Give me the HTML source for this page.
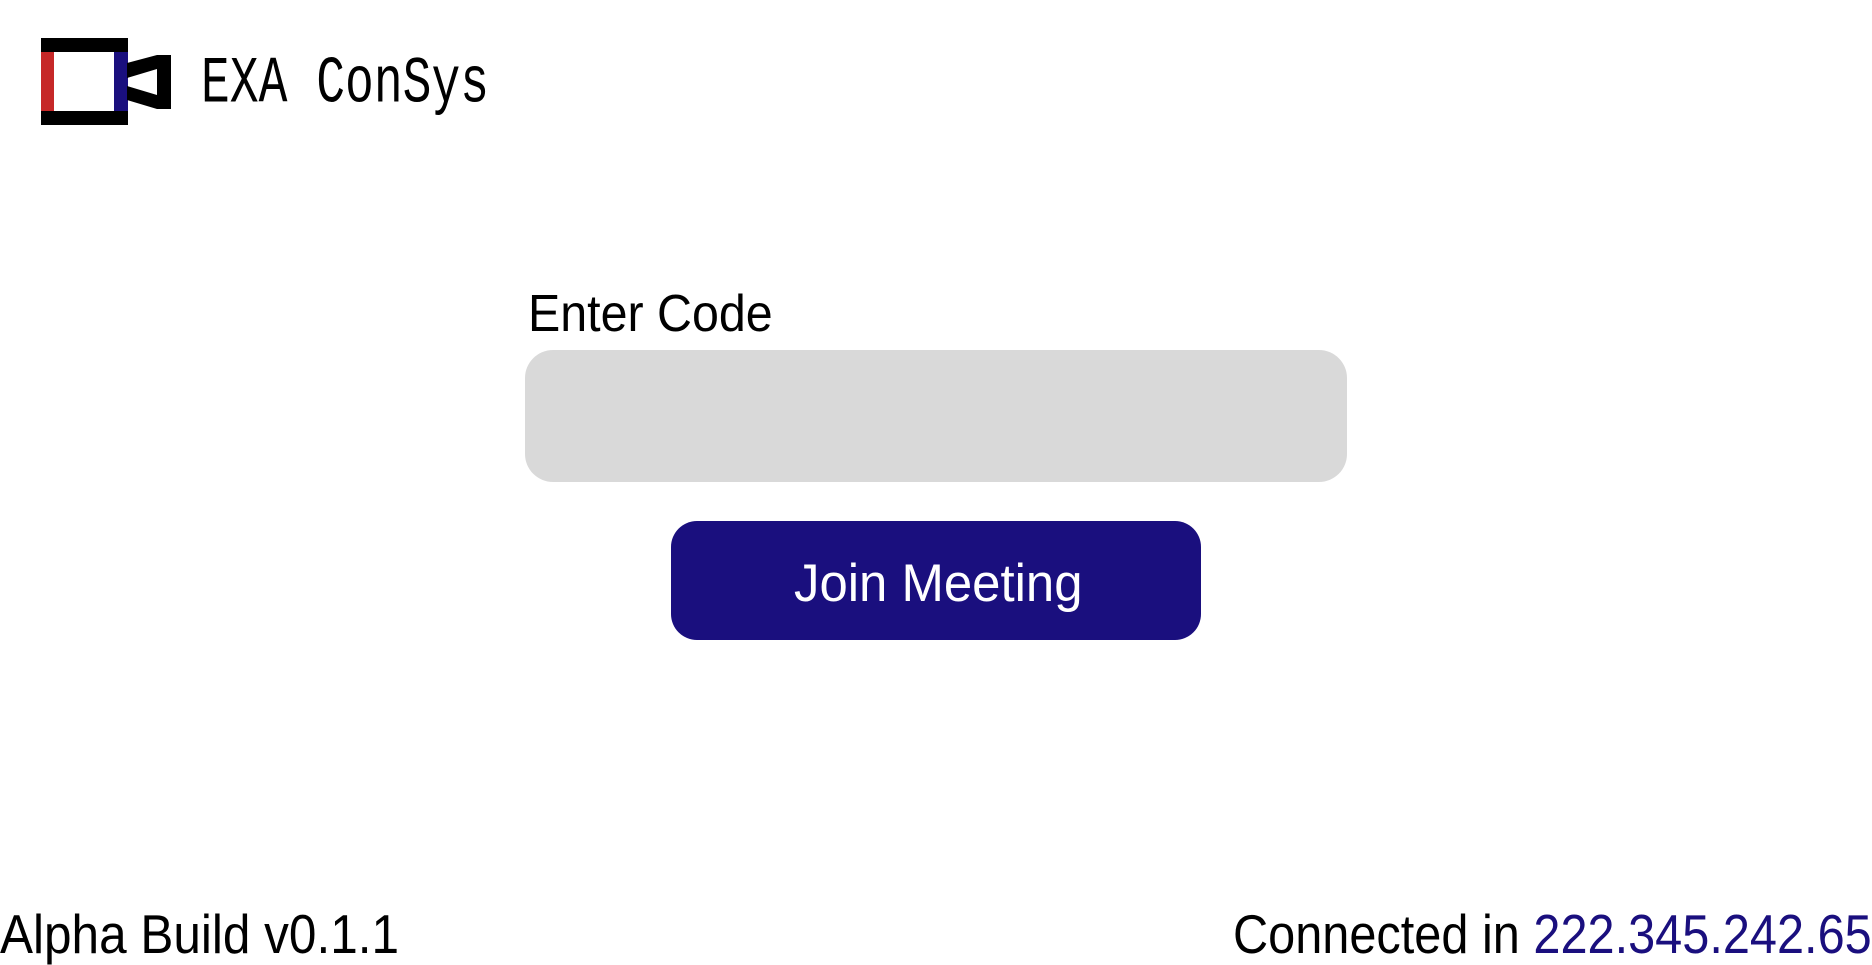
<!DOCTYPE html>
<html><head><meta charset="utf-8"><style>
html,body{margin:0;padding:0;width:1872px;height:965px;background:#fff;overflow:hidden;font-family:"Liberation Sans",sans-serif;}
.a{position:absolute;white-space:nowrap;line-height:1;}
.sx{display:inline-block;transform-origin:0 0;}
</style></head><body>
<svg class="a" style="left:0;top:0" width="200" height="140">
<rect x="41" y="38" width="87" height="14" fill="#000"/>
<rect x="41" y="111" width="87" height="14" fill="#000"/>
<rect x="41" y="52" width="13" height="59" fill="#c62828"/>
<rect x="114" y="52" width="14" height="59" fill="#1a0f7e"/>
<path fill="#000" fill-rule="evenodd" d="M127 63 L157 55 L171 55 L171 109 L157 109 L127 100 Z M127 78 L157 69 L157 95 L127 86 Z"/>
</svg>
<div class="a" style="left:201px;top:52px;font-family:'Liberation Mono',monospace;font-size:48px;"><span class="sx" style="transform:scale(1,1.38)">EXA ConSys</span></div>
<div class="a" style="left:528px;top:288px;font-size:52px;"><span class="sx" style="transform:scaleX(0.93)">Enter Code</span></div>
<div class="a" style="left:525px;top:350px;width:822px;height:132px;background:#d9d9d9;border-radius:28px;"></div>
<div class="a" style="left:671px;top:521px;width:530px;height:119px;background:#1a0f7e;border-radius:26px;"></div>
<div class="a" style="left:794px;top:557px;font-size:53px;color:#fff;"><span class="sx" style="transform:scaleX(0.96)">Join Meeting</span></div>
<div class="a" style="left:0;top:907px;font-size:55px;"><span class="sx" style="transform:scaleX(0.9)">Alpha Build v0.1.1</span></div>
<div class="a" style="left:1233px;top:907px;font-size:55px;"><span class="sx" style="transform:scaleX(0.885)">Connected in <span style="color:#1a0f7e">222.345.242.65</span></span></div>
</body></html>
